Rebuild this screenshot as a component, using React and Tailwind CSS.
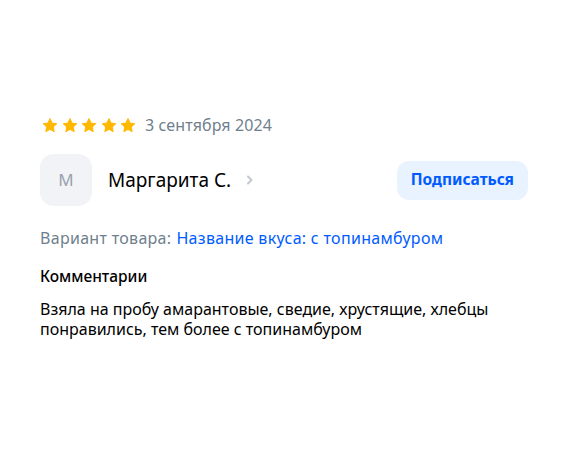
import React from "react";

const Star = () => (
  <svg width="16" height="15" viewBox="0 0 24 23" className="block">
    <path
      d="M12 1.2l3.1 6.6 7.1.9-5.2 4.9 1.3 7.1L12 17.2l-6.3 3.5 1.3-7.1L1.8 8.7l7.1-.9z"
      fill="#ffb800"
      stroke="#ffb800"
      strokeWidth="1.6"
      strokeLinejoin="round"
    />
  </svg>
);

export default function App() {
  return (
    <div
      className="w-[568px] h-[450px] bg-white px-10 pt-[115px] text-[#001a34]"
      style={{ fontFamily: '"Noto Sans", "Open Sans", sans-serif' }}
    >
      <div className="flex items-center h-[20px]">
        <div className="flex items-center gap-[3.5px] ml-[2px]">
          <Star />
          <Star />
          <Star />
          <Star />
          <Star />
        </div>
        <span className="ml-[9px] text-[16px] tracking-[0.1px] text-[#707f8d]">3 сентября 2024</span>
      </div>

      <div className="flex items-center mt-[19px] h-[52px]">
        <div className="w-[52px] h-[52px] rounded-[14px] bg-[#f2f3f7] flex items-center justify-center text-[17px] text-[#9aa3ae]">
          М
        </div>
        <span className="ml-4 text-[19px] text-black">Маргарита С.</span>
        <svg width="10" height="10" viewBox="0 0 10 10" className="ml-[14px]">
          <path d="M3 1.5L6.5 5 3 8.5" fill="none" stroke="#c4c9d1" strokeWidth="2" strokeLinecap="round" strokeLinejoin="round" />
        </svg>
        <button className="ml-auto h-[39px] px-[14px] rounded-[12px] bg-[#e9f2ff] text-[#005bff] text-[15.5px] font-bold">
          Подписаться
        </button>
      </div>

      <div className="mt-[20px] h-[24px] flex items-center text-[16px] tracking-[0.3px]">
        <span className="text-[#707f8d]">Вариант товара:</span>
        <span className="ml-[5px] text-[#005bff]">Название вкуса: с топинамбуром</span>
      </div>

      <div className="mt-[15px] h-[24px] flex items-center text-[15.5px] font-medium text-black">
        Комментарии
      </div>

      <p className="mt-[10px] text-[16px] leading-[20px] text-black">
        Взяла на пробу амарантовые, сведие, хрустящие, хлебцы понравились, тем более с топинамбуром
      </p>
    </div>
  );
}
